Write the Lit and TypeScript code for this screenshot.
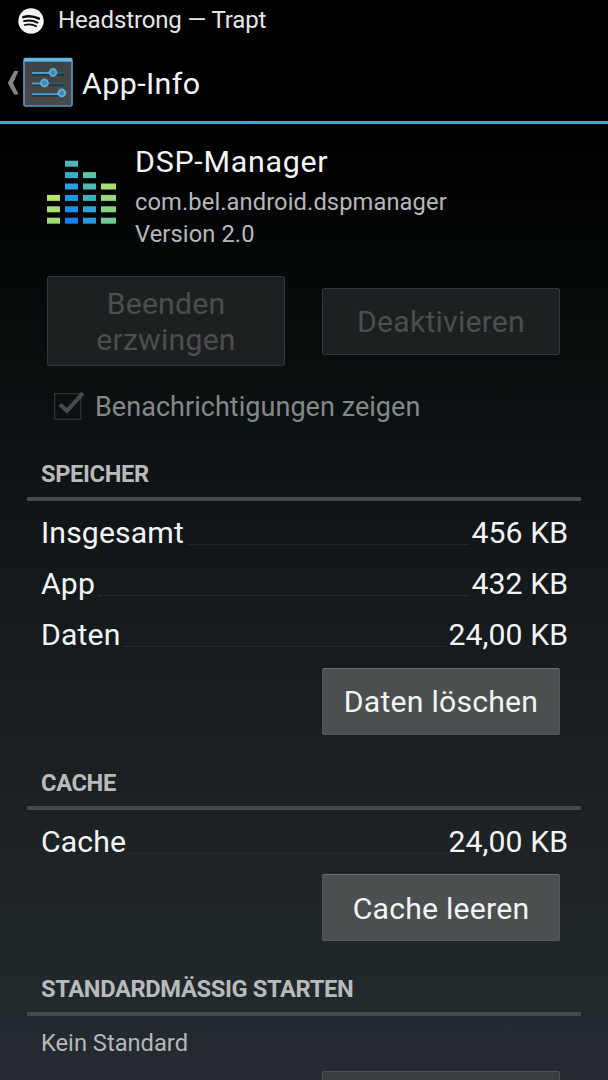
import { LitElement, html, svg, css } from "lit";
import { customElement, property } from "lit/decorators.js";

@customElement("info-section")
class InfoSection extends LitElement {
  @property() heading = "";
  static styles = css`
    :host { display: block; }
    .title { height: 47px; line-height: 49px; padding-left: 14px; font-size: 23.7px; font-weight: 700; color: #b9bbbb; letter-spacing: -0.37px; white-space: nowrap; }
    .rule { height: 4px; background: #46494b; margin-bottom: 6px; }
  `;
  render() {
    return html`<div class="title">${this.heading}</div><div class="rule"></div><slot></slot>`;
  }
}

@customElement("size-row")
class SizeRow extends LitElement {
  @property() label = "";
  @property() value = "";
  static styles = css`
    :host { display: flex; height: 51.2px; line-height: 51px; padding: 0 13px 0 14px; font-size: 30.2px; color: #f4f5f5; white-space: nowrap; }
    .label { letter-spacing: 0.13px; }
    .dots { flex: 1; height: 0; margin: 37px 3px 0 4px; border-top: 1px dotted #303537; }
    .value { letter-spacing: 0.05px; }
  `;
  render() {
    return html`<span class="label">${this.label}</span><span class="dots"></span><span class="value">${this.value}</span>`;
  }
}

const bars: [number, number, string[]][] = [
  [0, 13, ["#b9e467", "#a9df70", "#9bdb7a"]],
  [18, 13, ["#4db9b8", "#38adc7", "#2ba0dc", "#1c97e8", "#1990ec", "#1482f2"]],
  [36, 13, ["#5dc3aa", "#4dbab5", "#40b0c0", "#2fa4d2", "#239bdd"]],
  [54, 15, ["#a9df6e", "#98d97b", "#85d288", "#72cb95"]],
];

@customElement("app-root")
class AppRoot extends LitElement {
  static styles = css`
    :host { display: block; width: 608px; height: 1080px; overflow: hidden; font-family: Roboto, "Noto Sans", sans-serif; color: #f4f5f5;
      background: linear-gradient(#000 0, #000 124px, #030506 220px, #0a0f10 390px, #13181b 570px, #1b1f22 760px, #20272a 960px, #252b31 1080px); }
    svg { display: block; flex: none; }
    .status { display: flex; align-items: center; height: 42px; padding-left: 18px; font-size: 24px; color: #e6e6e6; box-sizing: border-box; border-bottom: 1px solid #080a0a; }
    .status span { margin-left: 14px; letter-spacing: -0.13px; position: relative; top: -1px; }
    .bar { display: flex; align-items: center; height: 79px; padding-left: 7px; font-size: 30.4px; border-bottom: 3px solid #4ba4cc; box-sizing: content-box; }
    .bar .chevron { margin-top: 2px; }
    .bar .icon { margin-left: 4px; }
    .bar .name { margin-left: 9px; position: relative; top: 2px; letter-spacing: 0.4px; }
    .head { display: flex; height: 152px; padding-left: 47px; box-sizing: border-box; }
    .head svg { margin-top: 36px; }
    .meta { margin-left: 19px; padding-top: 17px; }
    .app { font-size: 30.4px; line-height: 42px; letter-spacing: 0.72px; }
    .sub { font-size: 23.7px; line-height: 32px; color: #b6b8b8; letter-spacing: 0.1px; position: relative; top: 3px; }
    .pair { display: flex; align-items: center; justify-content: space-between; padding: 0 48px 0 47px; height: 90px; }
    .btn { box-sizing: border-box; width: 238px; height: 67px; padding-top: 2px; display: flex; align-items: center; justify-content: center; text-align: center; font-size: 30.2px; line-height: 36px; letter-spacing: 0.22px; background: #4b4f50; border: 1px solid #54585a; border-top-color: #6b6f70; border-radius: 2px; white-space: nowrap; }
    .off { background: #1d2020; border: 1.5px solid #343739; color: #4c4e4e; }
    .tall { height: 90px; }
    .check { display: flex; align-items: center; height: 84px; padding-left: 53px; font-size: 27px; color: #858888; box-sizing: border-box; padding-bottom: 2px; }
    .check svg { margin-bottom: 2px; }
    .check span { margin-left: 11px; letter-spacing: 0.04px; }
    .body { padding: 0 27px; }
    .action { display: flex; justify-content: flex-end; padding-right: 21px; }
    .one { padding-top: 7px; }
    .default { height: 41px; line-height: 42px; padding-left: 14px; font-size: 23.7px; color: #b6b8b8; }
    .speicher { height: 309px; }
    .cache { height: 206px; }
    .bottom { padding-top: 8px; }
    .faded { background: #383c3f; border: 1.5px solid #4c5053; }
  `;
  render() {
    return html`
      <div class="status">
        <svg width="26" height="26" viewBox="0 0 26 26"><circle cx="13" cy="13" r="12.7" fill="#f6f6f6"/><g fill="none" stroke="#080808" stroke-linecap="round"><path d="M5.2 9.1Q13 6.8 21 10.7" stroke-width="2.4"/><path d="M6 13.1Q13 11.2 19.5 14.6" stroke-width="2"/><path d="M6.7 17Q13 15.4 18.2 18.3" stroke-width="1.7"/></g></svg>
        <span>Headstrong — Trapt</span>
      </div>
      <div class="bar">
        <svg class="chevron" width="12" height="26" viewBox="0 0 12 26"><path d="M7.2 1H11.5L6 13L11.5 24.5H7.2L.8 13Z" fill="#858585"/></svg>
        <svg class="icon" width="50" height="50" viewBox="0 0 50 50">
          <defs><linearGradient id="p" x1="0" y1="0" x2="0" y2="1"><stop offset="0" stop-color="#3d4244"/><stop offset="1" stop-color="#4a4b4b"/></linearGradient></defs>
          <rect x="1" y="1.5" width="48" height="47.5" rx="1.5" fill="url(#p)" stroke="#5794bd" stroke-width="1.7"/><rect x="1" y="1" width="48" height="3.8" rx="1" fill="#61b8e2"/>
          <path d="M9 17.7H41M9 28H41M9 39H41" stroke="#27333b" stroke-width="1.5"/>
          <path d="M9 16H26M9 26.5H18M9 37.2H36" stroke="#4d9dcc" stroke-width="1.8"/><path d="M33 16H42M25 26.5H42" stroke="#315a73" stroke-width="1.4"/>
          <g fill="#3d87b4" stroke="#5bacd9" stroke-width="2"><circle cx="30" cy="15.5" r="3.4"/><circle cx="21.5" cy="26" r="3.4"/><circle cx="38.8" cy="36" r="3.4"/></g>
        </svg>
        <span class="name">App-Info</span>
      </div>
      <div class="head">
        <svg width="69" height="64" viewBox="0 0 69 64">${bars.map(([x, w, cs]) =>
          cs.map((c, i) => svg`<rect x=${x} y=${57.7 - (cs.length - 1 - i) * 11.4} width=${w} height="6" fill=${c}></rect>`))}</svg>
        <div class="meta"><div class="app">DSP-Manager</div><div class="sub">com.bel.android.dspmanager</div><div class="sub">Version 2.0</div></div>
      </div>
      <div class="pair"><div class="btn off tall">Beenden<br>erzwingen</div><div class="btn off">Deaktivieren</div></div>
      <div class="check">
        <svg width="31" height="30" viewBox="0 0 31 30"><rect x="1.7" y="2.7" width="26" height="25.6" fill="none" stroke="#2b3031" stroke-width="1.4"/><path d="M7 13.5L14 19.8L30 2" fill="none" stroke="#464b4c" stroke-width="4"/></svg>
        <span>Benachrichtigungen zeigen</span>
      </div>
      <div class="body">
        <info-section class="speicher" heading="SPEICHER">
          <size-row label="Insgesamt" value="456 KB"></size-row>
          <size-row label="App" value="432 KB"></size-row>
          <size-row label="Daten" value="24,00 KB"></size-row>
          <div class="action one"><div class="btn">Daten löschen</div></div>
        </info-section>
        <info-section class="cache" heading="CACHE">
          <size-row label="Cache" value="24,00 KB"></size-row>
          <div class="action one"><div class="btn">Cache leeren</div></div>
        </info-section>
        <info-section heading="STANDARDMÄSSIG STARTEN">
          <div class="default">Kein Standard</div>
          <div class="action bottom"><div class="btn faded"></div></div>
        </info-section>
      </div>`;
  }
}
